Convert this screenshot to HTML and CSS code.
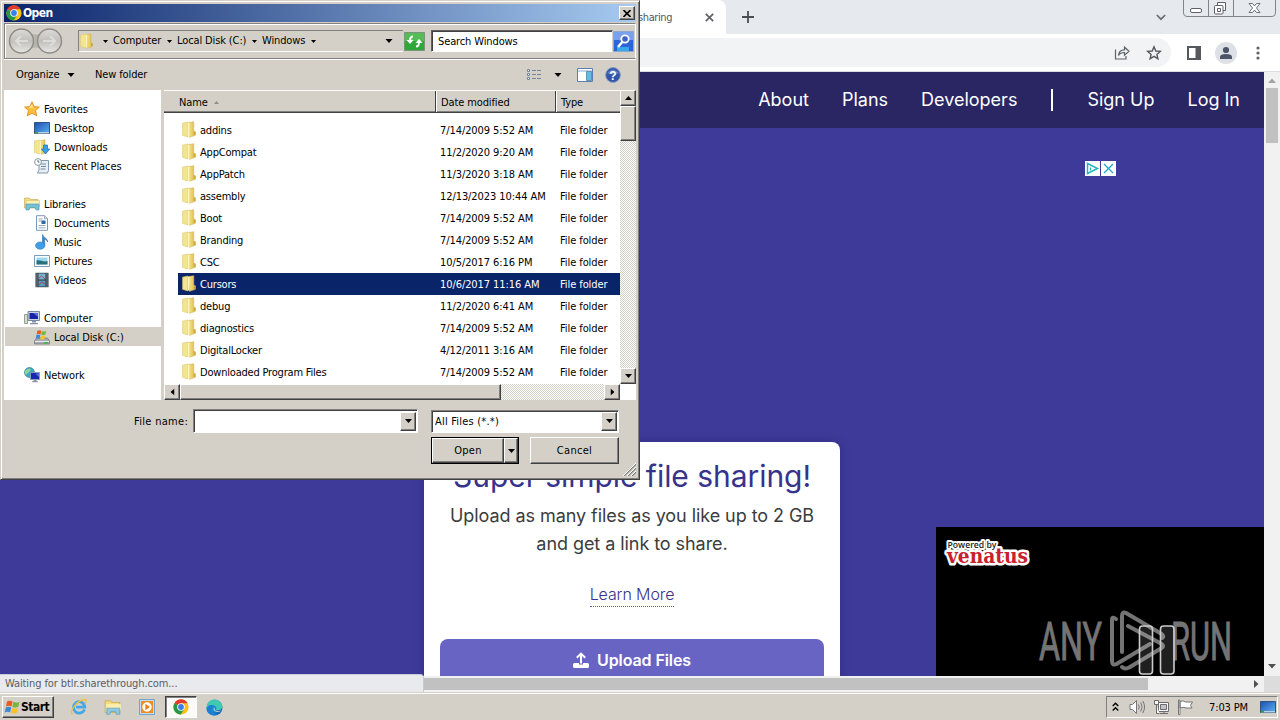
FILE: index.html
```html
<!DOCTYPE html>
<html lang="en">
<head>
<meta charset="utf-8">
<title>File sharing</title>
<link rel="stylesheet" href="styles.css">
</head>
<body>
<svg class="defs" width="0" height="0">
  <defs>
    <linearGradient id="gold" x1="0" x2="1"><stop offset="0" stop-color="#f3e08a"/><stop offset=".5" stop-color="#ead06c"/><stop offset="1" stop-color="#d4b040"/></linearGradient>
    <linearGradient id="screen" x1="0" y1="0" x2="1" y2="1"><stop offset="0" stop-color="#1c4fb4"/><stop offset="1" stop-color="#5cb0ee"/></linearGradient>
    <linearGradient id="steel" x1="0" y1="0" x2="0" y2="1"><stop offset="0" stop-color="#dcdad6"/><stop offset=".5" stop-color="#c2c0bc"/><stop offset="1" stop-color="#e8e6e2"/></linearGradient>
    <linearGradient id="edgeg" x1="0" y1="0" x2="1" y2="1"><stop offset="0" stop-color="#36c9a0"/><stop offset=".4" stop-color="#1c9fdc"/><stop offset="1" stop-color="#0d4fa6"/></linearGradient>
    <symbol id="folder" viewBox="0 0 16 16"><path d="M1.500 2 6.500 1v14l-5-1.500z" fill="#f3e491" stroke="#dcc972" stroke-width=".6"/><path d="M7 1.500 12 .8v8.700l1.500.7v3.300L8 15.300z" fill="url(#gold)" stroke="#d4ba5c" stroke-width=".6"/><path d="M6.500 1.500 8 2v13L6.500 14z" fill="#fff6bc"/><path d="M12 10h1.500v3H12z" fill="#c8a840"/></symbol>
    <symbol id="chrome" viewBox="0 0 16 16"><circle cx="8" cy="8" r="7.600" fill="#fbc116"/><path d="M8 8 1.400 4.200A7.600 7.600 0 0 1 14.600 4.200H8z" fill="#e33b2e"/><path d="M8 8 1.400 4.200A7.600 7.600 0 0 0 7.700 15.600L11.300 9.900z" fill="#279847"/><circle cx="8" cy="8" r="3.800" fill="#fff"/><circle cx="8" cy="8" r="2.900" fill="#3b7de9"/></symbol>
    <symbol id="star" viewBox="0 0 16 16"><path d="m8 .8 2.200 4.800 5.200.5-3.900 3.500 1.200 5.200L8 12.200l-4.700 2.600 1.200-5.200L.6 6.100l5.200-.5z" fill="#fcc03a" stroke="#e08a1c" stroke-width=".9"/><path d="m8 3 1.300 3.500L5 7z" fill="#ffeaa0"/></symbol>
    <symbol id="desktop" viewBox="0 0 16 16"><path d="M.5 2.500h15v11H.5z" fill="url(#screen)" stroke="#33537e"/><path d="M1 12h14v1.500H1z" fill="#b8cfe4"/><path d="M1 12h3v1.500H1z" fill="#3a9a4a"/></symbol>
    <symbol id="downloads" viewBox="0 0 16 16"><use href="#folder" x="-1"/><path d="M9.500 6h4v4h2.200L11.500 15 7.300 10h2.200z" fill="#3c9ce4" stroke="#1d6cb8" stroke-width=".7"/></symbol>
    <symbol id="recent" viewBox="0 0 16 16"><path d="M5 2.500h9.500v10l-1 2.500H3.500L5 12z" fill="#e8eef4" stroke="#8196a8"/><path d="M7 6h5M7 8.500h5M6.500 11h5" stroke="#6e8ca8"/><circle cx="4" cy="4" r="3.400" fill="#fff" stroke="#8196a8"/><path d="M4 2v2h1.500" stroke="#345" fill="none" stroke-width=".8"/></symbol>
    <symbol id="libraries" viewBox="0 0 16 16"><path d="M.5 2h5l1 1.500H14V12H.5z" fill="#f1dc8a" stroke="#cdae52" stroke-width=".7"/><path d="M2 4.500h13.500V11H2z" fill="#faf0b8" stroke="#d8bf68" stroke-width=".6"/><path d="M2 8h13v6h-3l-1-2.500H6L5 14H2z" fill="#74c0d8" stroke="#4a9ab8" stroke-width=".6"/></symbol>
    <symbol id="document" viewBox="0 0 16 16"><path d="M2.500.7h8l3 3v11.600h-11z" fill="#fff" stroke="#7d98b4"/><path d="M4.500 4h4M4.500 6h3M4.500 10.500h7M4.500 12.800h7" stroke="#92a9bf"/><path d="M7.500 5.500h4v3.500h-4z" fill="#2c68a4"/><path d="M10.500.7v3h3" fill="#cfe0ee" stroke="#7d98b4" stroke-width=".7"/></symbol>
    <symbol id="music" viewBox="0 0 16 16"><path d="M8.500.5c.5 3.200 5.300 3.400 5.200 7.500-.2-1.500-1.500-2.600-3-2.800v6.500H8.500z" fill="#3a86cc" stroke="#2a70b4" stroke-width=".6"/><ellipse cx="6.200" cy="11.600" rx="4.700" ry="3.700" fill="#3f9fe4" stroke="#2a70b4" stroke-width=".5"/></symbol>
    <symbol id="pictures" viewBox="0 0 16 16"><path d="M.5 2.500h15v11H.5z" fill="#fff" stroke="#7f9ab4"/><path d="M2.500 4.500h11v7h-11z" fill="#9bd8f0"/><path d="M2.500 7.500c4-1 7 2 11 .5v3.500h-11z" fill="#26717c"/></symbol>
    <symbol id="videos" viewBox="0 0 16 16"><path d="M1.500.8h13v14.400h-13z" fill="#26303a"/><path d="M4.500 1.500h7v6h-7z" fill="#78b4d8"/><path d="M4.500 8.500h7v6h-7z" fill="#5a9ac4"/><path d="m5 6 2.500-2L11 7M5 13l2.500-3 3.500 2" stroke="#a84a48" fill="none"/><path d="M3 1.500v13M13 1.500v13" stroke="#dfe8ee" stroke-dasharray="1 1"/></symbol>
    <symbol id="computer" viewBox="0 0 16 16"><path d="M.5 4.500h3v9h-3z" fill="#d6e0c0" stroke="#7c8c88" stroke-width=".8"/><path d="M4 1.500h11.500v9H4z" fill="#c8d2e0" stroke="#7888a8"/><path d="M5.500 3h8.500v6H5.500z" fill="#1620a8"/><path d="m9 3 5 0v4z" fill="#5668dc"/><path d="M8 11h4v1.500H8zM6 13h8v1.200H6z" fill="#8890a4"/></symbol>
    <symbol id="flag" viewBox="0 0 16 16"><path d="M2.500 2.500Q5 .8 8 2.500L7 7.500Q4.500 6 1.500 7.500z" fill="#ec5a22"/><path d="M8.800 2.800Q12 4.500 15 2.700L13.800 7.800Q11 9.200 7.900 7.900z" fill="#74b838"/><path d="M1.300 8.500Q4 7 6.800 8.500L5.600 13.500Q3 12 .2 13.500z" fill="#3b8ad8"/><path d="M7.700 8.900Q10.500 10.300 13.600 8.900L12.400 13.800Q9.500 15.200 6.500 13.800z" fill="#f8c224"/></symbol>
    <symbol id="disk" viewBox="0 0 16 16"><path d="m2.500 9-2 3v3h15v-3l-2-3z" fill="#a7abb0" stroke="#6d7478" stroke-width=".7"/><path d="M1 12.500h14" stroke="#e8eaec"/><path d="M10 13h4v1.500h-4z" fill="#32b83c"/><use href="#flag" x="1.500" y="0" width="11.500" height="11.500"/></symbol>
    <symbol id="network" viewBox="0 0 16 16"><circle cx="5.500" cy="5.500" r="5" fill="#3fa6bc" stroke="#2c7894" stroke-width=".6"/><path d="M2 3q4-3 5 0L4 6 2 8Q0 5 2 3z" fill="#8ed6a0"/><path d="M6.500 5.500h9v7h-9z" fill="#1828b0" stroke="#8e9cb8"/><path d="M11.500 6.500H15V10z" fill="#5b76e4"/><path d="M9.500 13h3v1.200h-3zM8 14.300h6v1H8z" fill="#8a94a6"/></symbol>
    <symbol id="explorer" viewBox="0 0 16 16"><path d="M1 2.500h5l1 1.500h7v9H1z" fill="#f4dc80" stroke="#cda848" stroke-width=".7"/><path d="M2 5.500h13V11H2z" fill="#fbefaf"/><path d="M2.500 9h11.500v5.500h-3l-.8-2.500H6l-.8 2.500H2.500z" fill="#8cc8e4" stroke="#5a9cc0" stroke-width=".6"/></symbol>
    <symbol id="down" viewBox="0 0 7 4"><path d="M0 0h7L3.500 4z"/></symbol>
  </defs>
</svg>

<div class="desktop">
  <div class="browser">
    <div class="tabstrip">
      <div class="tab"><span class="tab-title">sharing</span>
        <svg class="tab-x" width="9" height="9" viewBox="0 0 9 9"><path d="m.8.8 7.400 7.400M8.200.8.8 8.200" stroke="#5f6368" stroke-width="1.700"/></svg></div>
      <svg class="plus" width="12" height="12" viewBox="0 0 12 12"><path d="M6 0v12M0 6h12" stroke="#4a4d51" stroke-width="1.800"/></svg>
      <svg class="tabsearch" width="10" height="7" viewBox="0 0 10 7"><path d="m.8 1 4.200 4.200L9.200 1" fill="none" stroke="#6b6e73" stroke-width="1.700"/></svg>
      <div class="winbtns">
        <svg width="93" height="17" viewBox="0 0 93 17" fill="none" stroke="#80858b"><path d="M.5-1v14q0 3.500 3.500 3.500h85q3.500 0 3.500-3.500V-1M25.500 0v16M50.500 0v16"/><rect x="7.500" y="8.500" width="11" height="4" rx="1.500" fill="#fff" stroke="#5c6169"/><path d="M34.500 2.500h8v8h-8z" stroke="#5c6169" fill="#fff"/><rect x="31.500" y="5.500" width="8.500" height="8.500" rx="1" fill="#fff" stroke="#5c6169"/><path d="M34.500 8.500h3v3h-3z" stroke="#5c6169"/><path d="M66 3.500h3.500L71.500 6l2-2.500H77L73.500 8l3.500 4.500h-3.500l-2-2.500-2 2.500H66L69.500 8z" fill="#fff" stroke="#5c6169" stroke-width=".9"/></svg>
      </div>
    </div>
    <div class="toolbar">
      <div class="omnibox">
        <svg width="16" height="16" viewBox="0 0 16 16" fill="none" stroke="#5f6368" stroke-width="1.200"><path d="M1.500 4.500v9.500h10.500v-3"/><path d="M4.500 10.500c.3-4 2.500-5.700 6-5.700V2.200l4.500 4-4.500 4V7.500c-3 0-4.800.8-6 3z"/></svg>
        <svg class="fav" width="16" height="16" viewBox="0 0 16 16"><path d="m8 1.800 1.800 4.200 4.500.4-3.400 3 1 4.400L8 11.400l-3.900 2.400 1-4.400-3.400-3L6.200 6z" fill="none" stroke="#55595e" stroke-width="1.400"/></svg>
      </div>
      <svg class="panel-ic" width="14" height="14" viewBox="0 0 14 14"><path d="M1 1h12v12H1z" fill="#fff" stroke="#55585d" stroke-width="2"/><path d="M8.500 0H14v14H8.500z" fill="#55585d"/></svg>
      <svg class="avatar" width="22" height="22" viewBox="0 0 22 22"><circle cx="11" cy="11" r="11" fill="#dde0e5"/><circle cx="11" cy="8" r="3.100" fill="#4d5668"/><path d="M5 17v-2q0-3 6-3t6 3v2z" fill="#4d5668"/></svg>
      <svg class="dots" width="4" height="14" viewBox="0 0 4 14" fill="#5f6368"><circle cx="2" cy="2" r="1.600"/><circle cx="2" cy="7" r="1.600"/><circle cx="2" cy="12" r="1.600"/></svg>
    </div>
    <div class="viewport">
      <div class="page">
        <nav class="site-nav"><span class="n1">About</span><span class="n2">Plans</span><span class="n3">Developers</span><i></i><span class="n4">Sign Up</span><span class="n5">Log In</span></nav>
        <div class="stage">
          <section class="card">
            <h1>Super simple file sharing!</h1>
            <p><span class="l1">Upload as many files as you like up to 2 GB</span><br><span class="l2">and get a link to share.</span></p>
            <a>Learn More</a>
            <div class="upload"><svg width="16" height="16" viewBox="0 0 16 16"><path d="M8 11.500V2M3.800 5.800 8 1.600l4.200 4.200" fill="none" stroke="#fff" stroke-width="2"/><path d="M1.500 11H6v1.500h4V11h4.500q1.500 0 1.500 1.500V14.500q0 1.500-1.500 1.500h-13Q0 16 0 14.500v-2Q0 11 1.500 11z" fill="#fff"/></svg><span>Upload Files</span></div>
          </section>
          <div class="adchoice">
            <svg width="15" height="15" viewBox="0 0 15 15"><path d="M0 0h15v15H0z" fill="#fff"/><path d="M2.500 2.500v10l10-5z" fill="none" stroke="#23b1c4" stroke-width="1.400"/><path d="M5.500 6.500v3" stroke="#23b1c4" stroke-width="1.300"/></svg>
            <svg width="15" height="15" viewBox="0 0 15 15"><path d="M0 0h15v15H0z" fill="#fff"/><path d="m3 3 9 9M12 3l-9 9" stroke="#23a6c4" stroke-width="1.300"/></svg>
          </div>
          <div class="video">
            <svg width="328" height="149" viewBox="0 0 328 149">
              <g stroke="#fff" stroke-width="5" stroke-linejoin="round" paint-order="stroke"><text x="11" y="36" class="venatus" textLength="81" lengthAdjust="spacingAndGlyphs">venatus</text><text x="11.500" y="20.500" class="powered" textLength="49" lengthAdjust="spacingAndGlyphs">Powered by</text></g>
              <g class="any"><text x="103" y="133" textLength="63" lengthAdjust="spacingAndGlyphs">ANY</text><text x="235" y="133" textLength="61" lengthAdjust="spacingAndGlyphs">RUN</text></g>
              <g fill="none" stroke="#747474" stroke-width="4" stroke-linejoin="round" stroke-linecap="round"><path d="M180 92q-4-3-4 1v41q0 5 4.500 3L214 117"/><path d="M186 125V89q0-5 4-3l34 20q5 3 2 5"/><path d="m192 99 32 17q6 3 0 6l-30 18q-5 3-8 0"/></g>
              <g fill="#fff" fill-opacity=".12" stroke="#ccc" stroke-width="1.600"><rect x="203.500" y="99" width="13" height="48" rx="3"/><rect x="224.500" y="99" width="13.500" height="48" rx="3"/></g>
            </svg>
          </div>
        </div>
      </div>
      <div class="vbar"><svg width="8" height="5" viewBox="0 0 8 5"><path d="M0 5 4 .5 8 5z" fill="#a3a3a3"/></svg><div class="vthumb"></div><svg class="vd" width="8" height="5" viewBox="0 0 8 5"><path d="M0 0h8L4 4.500z" fill="#505050"/></svg></div>
      <div class="hbar"><div class="hthumb"></div><svg width="5" height="8" viewBox="0 0 5 8"><path d="M0 0v8l4.500-4z" fill="#505050"/></svg></div>
      <div class="corner"></div>
      <div class="status">Waiting for btlr.sharethrough.com...</div>
    </div>
  </div>

  <div class="taskbar">
    <div class="start"><svg width="17" height="16"><use href="#flag"/></svg><b>Start</b></div>
    <div class="quick">
      <svg width="18" height="18" viewBox="0 0 18 18"><path d="M14.500 11.500a5.700 5.700 0 1 1 .2-3.500v1.200H6" fill="none" stroke="#45a8e4" stroke-width="2.800"/><path d="M2.500 16.500C-1.500 13 8 2 14.500 1.500c2.500 0 1.500 3 .5 4.500" fill="none" stroke="#ecc040" stroke-width="1.300"/></svg>
      <svg width="18" height="18"><use href="#explorer"/></svg>
      <svg width="18" height="18" viewBox="0 0 18 18"><path d="M1.500 1.500h15v15h-15z" fill="#c6dcee" stroke="#6ea6cf"/><path d="M3 3h12v12H3z" fill="#f18d20"/><circle cx="9" cy="9" r="4.700" fill="#fff"/><path d="M7.400 5.800v6.400L12 9z" fill="#ee7e14"/></svg>
      <div class="pressed"><svg width="16" height="16"><use href="#chrome"/></svg></div>
      <svg width="17" height="17" viewBox="0 0 17 17"><circle cx="8.500" cy="8.500" r="8" fill="url(#edgeg)"/><path d="M1 6C4-1 14-1 16.300 6.500c.8 3.500-3 5.200-6.800 4.500 2-1.500 1-4.500-2.500-4.500C4.500 6.500 2 7.500.5 9.500z" fill="#40c8b0"/><path d="M.6 9C2 5.500 7 5 9 7.500 6.500 7.500 5.500 10 6.500 12.500 7.500 15 11 16 13 15 7 18.500 0 15 .6 9z" fill="#1b80d2"/><path d="M9 8.500c-1.300 1.800 0 3.800 3.500 3.700l2.700-.8q-1.500 1.700-4 1.700-3-.3-3.700-2.300-.2-1.800 1.500-2.300z" fill="#d4d0c8"/></svg>
    </div>
    <div class="tray">
      <svg width="7" height="10" viewBox="0 0 7 10" fill="none" stroke="#000" stroke-width="1.400"><path d="M.7 4 3.500 1.200 6.300 4M.7 8.500l2.800-2.800 2.800 2.800"/></svg>
      <svg class="t2" width="16" height="16" viewBox="0 0 16 16" fill="#fff" stroke="#77777a"><path d="M1 5.500h2.500L7.500 1.500v13l-4-4H1z"/><path d="M9.500 5.500q1.500 2.500 0 5M11.700 3.500q3 4.500 0 9M13.800 2q3.500 6 0 12" fill="none"/></svg>
      <svg class="t3" width="17" height="16" viewBox="0 0 17 16" fill="#f6f6f6" stroke="#6c6c6e"><path d="M5.500 3.500h10v9h-10z"/><path d="M7.500 5.500h6v5h-6z" fill="#c4c4c4"/><path d="M7 14.500h8M11 12.500v2M1.500 1.500h4v4h-4zM3.500 5.500v9h3"/></svg>
      <svg class="t4" width="17" height="16" viewBox="0 0 17 16" fill="#fff" stroke="#77777a"><path d="M1.500 1v14.500h1.500V1zM3 2.500q3-1.500 5.500.5h7l-2 3.300 1.500 2.700H9Q6 7.500 3 9z"/></svg>
      <span>7:03 PM</span>
      <svg class="t5" width="16" height="16"><use href="#desktop"/></svg>
    </div>
  </div>

  <div class="dialog">
    <div class="titlebar"><svg width="16" height="16"><use href="#chrome"/></svg><b>Open</b>
      <div class="btn close"><svg width="8" height="7" viewBox="0 0 8 7"><path d="m.5 0 7 7M7.500 0l-7 7" stroke="#000" stroke-width="1.600"/></svg></div></div>
    <div class="rebar">
      <svg class="navs" width="56" height="28" viewBox="0 0 56 28"><path d="M14 4q14 7 28 0v20q-14-7-28 0z" fill="#b7b4ae"/><circle cx="13.500" cy="14" r="12" fill="url(#steel)" stroke="#8f8d8a" stroke-width="1.500"/><circle cx="41.500" cy="14" r="12" fill="url(#steel)" stroke="#8f8d8a" stroke-width="1.500"/><path d="M20 14H8m5-5-5 5 5 5M35 14h12m-5-5 5 5-5 5" fill="none" stroke="#dedcd8" stroke-width="2.200"/></svg>
      <div class="address"><svg width="16" height="18"><use href="#folder"/></svg>
        <svg class="ch c0"><use href="#down"/></svg><span class="a1">Computer</span><svg class="ch"><use href="#down"/></svg><span class="a2">Local Disk (C:)</span><svg class="ch"><use href="#down"/></svg><span class="a3">Windows</span><svg class="ch"><use href="#down"/></svg>
        <svg class="dd"><use href="#down"/></svg></div>
      <svg class="refresh" width="21" height="19" viewBox="0 0 21 19"><path d="M.5.500h20v18H.5z" fill="#2fa83a" stroke="#79957b"/><path d="M1 1h19v8H1z" fill="#55bd58"/><path d="M9 4.500Q6 4.500 6 9M12 14.500q3 0 3-4.500" fill="none" stroke="#fff" stroke-width="2"/><path d="M2.500 8h7L6 12zM11.500 11h7L15 7z" fill="#fff"/></svg>
      <div class="search">Search Windows</div>
      <svg class="go" width="21" height="21" viewBox="0 0 21 21"><path d="M.5.500h20v20H.5z" fill="#2c66d4" stroke="#8ea6cc"/><path d="M1 1h19v8H1z" fill="#79a0ec"/><path d="M4 16h12v4H4z" fill="#38a8ec"/><circle cx="12" cy="8" r="3.700" fill="#3b62cc" stroke="#fff" stroke-width="1.800"/><path d="m9.200 11-4.200 5" stroke="#fff" stroke-width="2.400"/></svg>
    </div>
    <div class="cmds"><span class="k1">Organize</span><svg class="dd"><use href="#down"/></svg><span class="k2">New folder</span>
      <svg class="views" width="16" height="14" viewBox="0 0 16 14" fill="#fff" stroke="#73859a"><path d="M1.500 1.500h2v2h-2zM1.500 5.500h2v2h-2zM1.500 9.500h2v2h-2z"/><path d="M6 2.500h4M11 2.500h4M6 6.500h4M11 6.500h4M6 10.500h4M11 10.500h4"/></svg>
      <svg class="dd d2"><use href="#down"/></svg>
      <svg class="pane" width="16" height="14" viewBox="0 0 16 14"><path d="M.5.500h15v13H.5z" fill="#fff" stroke="#5a7fae"/><path d="M1 3h14" stroke="#8fa9c9"/><path d="M9.500 3.500h5v9h-5z" fill="#62bce0" stroke="#6492b4"/></svg>
      <svg class="help" width="16" height="16" viewBox="0 0 16 16"><circle cx="8" cy="8" r="7.400" fill="#2f56a8" stroke="#8a9cc0"/><path d="M2 6q6-7 12 0-6 3-12 0" fill="#5f80c4"/><text x="8" y="12.500" text-anchor="middle" class="q">?</text></svg>
    </div>
    <div class="panes">
      <div class="tree">
        <div><svg><use href="#star"/></svg><span>Favorites</span></div>
        <div class="sub"><svg><use href="#desktop"/></svg><span>Desktop</span></div>
        <div class="sub"><svg><use href="#downloads"/></svg><span>Downloads</span></div>
        <div class="sub"><svg><use href="#recent"/></svg><span>Recent Places</span></div>
        <div></div>
        <div><svg><use href="#libraries"/></svg><span>Libraries</span></div>
        <div class="sub"><svg><use href="#document"/></svg><span>Documents</span></div>
        <div class="sub"><svg><use href="#music"/></svg><span>Music</span></div>
        <div class="sub"><svg><use href="#pictures"/></svg><span>Pictures</span></div>
        <div class="sub"><svg><use href="#videos"/></svg><span>Videos</span></div>
        <div></div>
        <div><svg><use href="#computer"/></svg><span>Computer</span></div>
        <div class="sub cur"><svg><use href="#disk"/></svg><span>Local Disk (C:)</span></div>
        <div></div>
        <div><svg><use href="#network"/></svg><span>Network</span></div>
      </div>
      <div class="list">
        <div class="main">
          <div class="head"><div class="h1">Name <svg width="5" height="3" viewBox="0 0 5 3"><path d="M0 3 2.500 0 5 3z" fill="#918d86"/></svg></div><div class="h2">Date modified</div><div class="h3">Type</div></div>
          <div class="rows">
            <div><svg><use href="#folder"/></svg><span>addins</span><span>7/14/2009 5:52 AM</span><span>File folder</span></div>
            <div><svg><use href="#folder"/></svg><span>AppCompat</span><span>11/2/2020 9:20 AM</span><span>File folder</span></div>
            <div><svg><use href="#folder"/></svg><span>AppPatch</span><span>11/3/2020 3:18 AM</span><span>File folder</span></div>
            <div><svg><use href="#folder"/></svg><span>assembly</span><span>12/13/2023 10:44 AM</span><span>File folder</span></div>
            <div><svg><use href="#folder"/></svg><span>Boot</span><span>7/14/2009 5:52 AM</span><span>File folder</span></div>
            <div><svg><use href="#folder"/></svg><span>Branding</span><span>7/14/2009 5:52 AM</span><span>File folder</span></div>
            <div><svg><use href="#folder"/></svg><span>CSC</span><span>10/5/2017 6:16 PM</span><span>File folder</span></div>
            <div class="sel"><svg><use href="#folder"/></svg><span>Cursors</span><span>10/6/2017 11:16 AM</span><span>File folder</span></div>
            <div><svg><use href="#folder"/></svg><span>debug</span><span>11/2/2020 6:41 AM</span><span>File folder</span></div>
            <div><svg><use href="#folder"/></svg><span>diagnostics</span><span>7/14/2009 5:52 AM</span><span>File folder</span></div>
            <div><svg><use href="#folder"/></svg><span>DigitalLocker</span><span>4/12/2011 3:16 AM</span><span>File folder</span></div>
            <div><svg><use href="#folder"/></svg><span>Downloaded Program Files</span><span>7/14/2009 5:52 AM</span><span>File folder</span></div>
          </div>
        </div>
        <div class="sv"><div class="btn sb"><svg class="ar up"><use href="#down"/></svg></div><div class="btn th"></div><div class="btn sb end"><svg class="ar"><use href="#down"/></svg></div></div>
        <div class="sh"><div class="btn sb"><svg class="ar lf"><use href="#down"/></svg></div><div class="btn th"></div><div class="btn sb end"><svg class="ar rt"><use href="#down"/></svg></div></div>
      </div>
    </div>
    <div class="footer">
      <div class="frow"><label>File name:</label><div class="combo f1"><div class="btn"><svg class="ar"><use href="#down"/></svg></div></div><div class="combo f2"><span>All Files (*.*)</span><div class="btn"><svg class="ar"><use href="#down"/></svg></div></div></div>
      <div class="frow r2"><div class="open"><div class="btn ob">Open</div><div class="btn oa"><svg class="ar"><use href="#down"/></svg></div></div><div class="btn cancel">Cancel</div></div>
      <svg class="grip" width="13" height="13" viewBox="0 0 13 13"><path d="M1 13 13 1M5 13l8-8M9 13l4-4" stroke="#808080" stroke-width="1.300"/><path d="M0 13 13 0M4 13l9-9M8 13l5-5" stroke="#fff"/></svg>
    </div>
  </div>
</div>
</body>
</html>
```

FILE: styles.css
```css
* { box-sizing: border-box; }
body { margin: 0; overflow: hidden; }
svg { display: block; flex: none; }
.defs { position: absolute; }
.desktop { position: relative; width: 1280px; height: 720px; display: flex; flex-direction: column; font: 11px/14px "DejaVu Sans Condensed", "DejaVu Sans", sans-serif; font-stretch: condensed; letter-spacing: -0.12px; color: #000; white-space: nowrap; }

/* Browser */
.browser { height: 692px; display: flex; flex-direction: column; }
.tabstrip { height: 34px; background: #e6e9ed; display: flex; align-items: center; }
.tab { width: 726px; height: 34px; background: #fff; border-radius: 0 8px 0 0; display: flex; align-items: center; padding-left: 638px; color: #55585c; letter-spacing: -.4px; }
.tab-title { width: 67px; padding-top: 1px; }
.plus { margin-left: 16px; }
.tabsearch { margin-left: auto; }
.winbtns { margin-left: 17px; margin-right: 4px; align-self: flex-start; }
.toolbar { height: 38px; background: #fff; border-bottom: 1px solid #dadce0; display: flex; align-items: center; padding-right: 20px; }
.omnibox { width: 1171px; height: 29px; background: #f1f3f4; border-radius: 15px; display: flex; align-items: center; justify-content: flex-end; padding-right: 9px; gap: 16px; }
.panel-ic { margin-left: 16px; }
.avatar { margin-left: 14px; }
.dots { margin-left: auto; }
.viewport { flex: 1; display: grid; grid-template-columns: 1264px 16px; grid-template-rows: 604px 16px; position: relative; }
.page { display: flex; flex-direction: column; height: 604px; background: #3d3a99; overflow: hidden; }
.site-nav { flex: none; height: 56px; background: #292663; color: #fff; display: flex; align-items: center; justify-content: flex-end; padding-right: 24px; font: 18px/24px Inter, sans-serif; letter-spacing: 0; }
.site-nav i { width: 2px; height: 22px; background: #fff; margin: 0 34px; }
.site-nav span { margin-left: 33px; }
.site-nav .n4 { margin-left: 0; }
.stage { position: relative; height: 548px; flex: none; display: flex; justify-content: center; }
.card { width: 416px; height: 300px; margin: 314px 0 0; background: #fff; border-radius: 8px; padding: 14px 16px 0; display: flex; flex-direction: column; align-items: center; font-family: Inter, sans-serif; box-shadow: 0 0 10px rgba(20,15,80,.25); }
.card h1 { margin: 0; font: 400 30px/40px Inter, sans-serif; color: #37328c; letter-spacing: -.05px; }
.card p { margin: 6px 0 0; font-size: 18px; line-height: 28px; color: #3c3c3e; text-align: center; letter-spacing: -.06px; }
.card a { margin-top: 24px; font-size: 16px; line-height: 24px; font-weight: 300; color: #37328c; border-bottom: 1px dotted #5a56a8; letter-spacing: -.1px; }
.upload { margin-top: 32px; width: 384px; height: 60px; flex: none; border-radius: 8px; background: #6764c4; color: #fff; display: flex; justify-content: center; gap: 8px; padding-top: 13px; font-size: 16px; line-height: 17px; font-weight: 600; letter-spacing: -.1px; }
.adchoice { position: absolute; left: 1085px; top: 33px; display: flex; gap: 1px; }
.video { position: absolute; left: 936px; top: 399px; width: 328px; height: 149px; background: #000; }
.powered { font: 600 9.500px "Open Sans", sans-serif; fill: #222; letter-spacing: 0; stroke-width: 4px; }
.venatus { font: 700 20px "DejaVu Serif", serif; fill: #c8202f; letter-spacing: 0; }
.any { font: 400 53px "Roboto", sans-serif; fill: #747474; stroke: #747474; stroke-width: 1px; letter-spacing: 0; }
.vbar { background: #f1f1f1; display: flex; flex-direction: column; align-items: center; padding: 6px 0 7px; }
.vthumb { width: 12px; height: 55px; margin-top: 5px; background: #c1c1c1; }
.vd { margin-top: auto; }
.hbar { background: #f1f1f1; display: flex; align-items: center; padding: 0 5px 0 16px; justify-content: space-between; }
.hthumb { width: 1132px; height: 12px; background: #c1c1c1; }
.corner { background: #dcdcdc; }
.status { position: absolute; left: 0; top: 602px; width: 424px; height: 18px; background: #e8eaee; border-top: 1px solid #c8cad8; border-right: 1px solid #c8cad0; border-radius: 0 4px 0 0; color: #5a5d62; padding: 2px 5px; letter-spacing: -.1px; }

/* Taskbar */
.taskbar { height: 28px; background: #d4d0c8; box-shadow: inset 0 1px #d4d0c8, inset 0 2px #fff; display: flex; align-items: center; padding: 2px 2px 0; }
.start { width: 52px; height: 22px; border: 1px solid; border-color: #fff #404040 #404040 #fff; box-shadow: inset -1px -1px #808080; display: flex; align-items: center; padding-left: 1px; font-size: 12px; letter-spacing: -.5px; }
.quick { display: flex; align-items: center; margin-left: 16px; }
.quick > svg { margin-right: 16px; }
.quick > svg:nth-child(3) { margin-right: 9px; }
.pressed { width: 32px; height: 22px; margin-right: 9px; background: #fbfaf8; border: 1px solid; border-color: #404040 #fff #fff #404040; box-shadow: inset 1px 1px #808080; display: flex; align-items: center; justify-content: center; }
.tray { margin-left: auto; width: 172px; height: 22px; border: 1px solid; border-color: #808080 #fff #fff #808080; display: flex; align-items: center; padding-left: 5px; }
.t2 { margin-left: 10px; } .t3 { margin-left: 8px; } .t4 { margin-left: 7px; }
.tray span { margin-left: 15px; width: 51px; padding-top: 1px; }

/* Dialog */
.dialog { position: absolute; left: 0; top: 0; width: 640px; height: 480px; background: #d4d0c8; border: 1px solid; border-color: #d4d0c8 #404040 #404040 #d4d0c8; box-shadow: inset 1px 1px #fff, inset -1px -1px #808080; padding: 3px; display: flex; flex-direction: column; }
.btn { background: #d4d0c8; border: 1px solid; border-color: #fff #404040 #404040 #fff; box-shadow: inset -1px -1px #808080; display: flex; align-items: center; justify-content: center; }
.titlebar { height: 18px; background: linear-gradient(90deg, #0a246a, #a6caf0); color: #fff; display: flex; align-items: center; padding: 0 1px 0 2px; gap: 1px; font-size: 12px; letter-spacing: -.6px; }
.close { margin-left: auto; width: 16px; height: 14px; padding-right: 1px; }
.rebar { height: 36px; margin-top: 1px; width: 632px; border: 1px solid; border-color: #808080 #fff #808080 #808080; box-shadow: inset 1px 1px #fff, 0 1px #fff; display: flex; align-items: center; padding-left: 3px; }
.address { margin-left: 14px; width: 325px; height: 22px; border-top: 1px solid #808080; border-left: 1px solid #808080; border-bottom: 1px solid #fff; display: flex; align-items: center; padding-right: 10px; }
.address .a1 { width: 48px; margin: 0 6px 0 5px; }
.address .a2 { width: 69px; margin: 0 6px 0 5px; }
.address .a3 { width: 43px; margin: 0 6px 0 5px; }
.ch { width: 5px; height: 3px; }
.c0 { margin-left: 8px; }
.dd { width: 8px; height: 4px; }
.address .dd { margin-left: auto; }
.refresh { margin-left: 1px; }
.search { margin-left: 6px; width: 182px; height: 22px; background: #fff; border: 1px solid; border-color: #606060 #d4d0c8 #fff #606060; box-shadow: inset 1px 1px #404040; padding: 4px 6px; }
.cmds { height: 31px; display: flex; align-items: center; padding-left: 12px; }
.k1 { width: 51px; }
.k2 { width: 53px; margin-left: 20px; }
.views { margin-left: 378px; }
.d2 { margin-left: 12px; }
.pane { margin-left: 15px; }
.help { margin-left: 12px; }
.q { font: 700 12px "Liberation Sans", sans-serif; fill: #fff; letter-spacing: 0; }
.panes { height: 310px; display: flex; gap: 3px; }
.tree { width: 157px; background: #fff; padding: 9px 0 0 1px; letter-spacing: -.1px; }
.tree > div { height: 19px; display: flex; align-items: center; gap: 4px; padding-left: 19px; }
.tree > .sub { padding-left: 29px; }
.tree > .cur { background: #d4d0c8; }
.tree svg { width: 16px; height: 16px; }
.tree span { padding-top: 3px; }
.list { width: 472px; background: #fff; display: grid; grid-template-columns: 456px 16px; grid-template-rows: 294px 16px; }
.head { height: 23px; display: flex; background: #d4d0c8; border-bottom: 1px solid #404040; border-top: 1px solid #fff; box-shadow: inset 0 -1px #808080; align-items: stretch; }
.head > div { display: flex; align-items: center; gap: 6px; padding: 2px 0 0 4px; }
.head .h1 { width: 272px; padding-left: 15px; border-right: 1px solid #404040; }
.head .h2 { width: 120px; border-right: 1px solid #404040; border-left: 1px solid #fff; }
.head .h3 { border-left: 1px solid #fff; }
.rows { padding-top: 6px; }
.rows > div { height: 22px; margin-left: 14px; display: grid; grid-template-columns: 22px 240px 120px 60px; align-items: center; }
.rows span { padding-top: 1px; letter-spacing: -.08px; }
.rows span:nth-child(2) { letter-spacing: -.2px; }
.rows svg { width: 17px; height: 17px; margin: -1px 0 0 3px; }
.rows .sel { background: #0a246a; color: #fff; }
.sv, .sh { background: repeating-conic-gradient(#fff 0 25%, #d4d0c8 0 50%) 0 0 / 2px 2px; display: flex; }
.sv { flex-direction: column; }
.sb { width: 16px; height: 16px; flex: none; }
.sv .th { height: 35px; }
.sh .th { width: 321px; }
.end { margin-top: auto; }
.sh .end { margin-top: 0; margin-left: auto; }
.ar { width: 7px; height: 4px; }
.up { transform: rotate(180deg); } .lf { transform: rotate(90deg); } .rt { transform: rotate(-90deg); }
.footer { flex: 1; position: relative; padding-top: 9px; }
.frow { display: flex; align-items: center; }
.frow label { width: 59px; margin-left: 130px; padding-top: 2px; letter-spacing: .3px; }
.combo { height: 24px; background: #fff; border: 1px solid; border-color: #808080 #fff #fff #808080; box-shadow: inset 1px 1px #404040; display: flex; align-items: center; padding: 2px 1px 2px 3px; letter-spacing: .2px; }
.combo .btn { margin-left: auto; width: 16px; height: 19px; }
.combo span { padding-top: 1px; }
.f1 { width: 225px; } .f2 { width: 188px; margin-left: 13px; height: 23px; }
.r2 { margin: 4px 0 0 427px; letter-spacing: .3px; }
.open { display: flex; width: 88px; height: 27px; border: 1px solid #000; }
.ob { width: 72px; flex: none; padding-top: 1px; } .oa { flex: 1; }
.cancel { width: 89px; height: 27px; margin-left: 11px; padding-top: 1px; }
.grip { position: absolute; right: 0; bottom: 0; }
```
